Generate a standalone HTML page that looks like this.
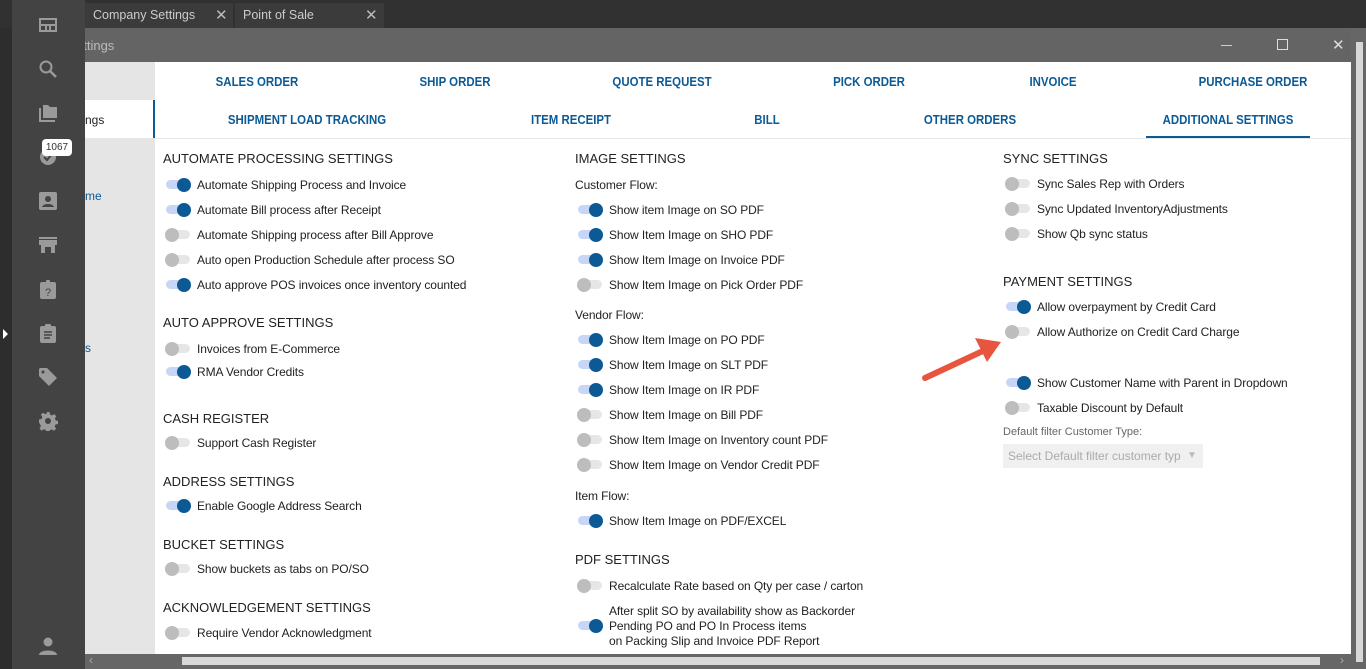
<!DOCTYPE html>
<html><head><meta charset="utf-8"><style>
*{margin:0;padding:0;box-sizing:border-box}
body{width:1366px;height:669px;overflow:hidden;background:#2d2d2d;font-family:"Liberation Sans",sans-serif;position:relative}
.a{position:absolute;white-space:nowrap}
.h{font-size:13px;color:#222;line-height:16px}
.l{font-size:12px;color:#222;line-height:14px;letter-spacing:-0.1px}
.tab{position:absolute;font-family:"Liberation Sans Narrow","Liberation Sans",sans-serif;font-weight:bold;font-size:13px;color:#0b5a96;text-align:center;width:240px;margin-left:-120px;line-height:16px;transform:scaleX(0.88)}
.t{position:absolute;width:24px;height:9px;border-radius:5px}
.t i{position:absolute;top:-2.5px;width:14px;height:14px;border-radius:50%}
.on{background:#c7d6f6}.on i{right:-1px;background:#0b5a96}
.off{background:#e6e6e6}.off i{left:-1px;background:#bdbdbd}
.ic{position:absolute;left:38px;width:20px;height:20px;fill:#9a9a9a}
</style></head><body>
<div class="a" style="left:0;top:0;width:1366px;height:28px;background:#313131"></div>
<div class="a" style="left:85px;top:3px;width:148px;height:25px;background:#3b3b3b;color:#ccc;font-size:12.5px;line-height:25px;padding-left:8px">Company Settings<span style="position:absolute;left:130px;font-size:15px;color:#bbb">✕</span></div>
<div class="a" style="left:235px;top:3px;width:149px;height:25px;background:#3b3b3b;color:#ccc;font-size:12.5px;line-height:25px;padding-left:8px">Point of Sale<span style="position:absolute;left:130px;font-size:15px;color:#bbb">✕</span></div>
<div class="a" style="left:12px;top:28px;width:1340px;height:34px;background:#646464"></div>
<div class="a" style="left:76px;top:38px;color:#bbb;font-size:13px">ettings</div>
<div class="a" style="left:1221px;top:45px;width:11px;height:1px;background:#ccc"></div>
<div class="a" style="left:1277px;top:39px;width:11px;height:11px;border:1.5px solid #ddd"></div>
<div class="a" style="left:1332px;top:36px;color:#ddd;font-size:15px">✕</div>
<div class="a" style="left:1351px;top:28px;width:15px;height:641px;background:#666"></div>
<div class="a" style="left:1356px;top:42px;width:7px;height:620px;background:#d8d8d8"></div>
<div class="a" style="left:85px;top:62px;width:70px;height:592px;background:#e5e5e5"></div>
<div class="a" style="left:85px;top:100px;width:70px;height:38px;background:#fff;border-right:2px solid #0b5a96"></div>
<div class="a" style="left:85px;top:113px;font-size:12px;color:#222">ngs</div>
<div class="a" style="left:85px;top:189px;font-size:12px;color:#0b5a96">me</div>
<div class="a" style="left:85px;top:341px;font-size:12px;color:#0b5a96">s</div>
<div class="a" style="left:155px;top:62px;width:1196px;height:592px;background:#fff"></div>
<div class="a" style="left:155px;top:138px;width:1196px;height:1px;background:#e8e8e8"></div>
<div class="a" style="left:1146px;top:136px;width:164px;height:2px;background:#0b5a96"></div>
<div class="tab" style="left:257px;top:74px">SALES ORDER</div>
<div class="tab" style="left:455px;top:74px">SHIP ORDER</div>
<div class="tab" style="left:662px;top:74px">QUOTE REQUEST</div>
<div class="tab" style="left:869px;top:74px">PICK ORDER</div>
<div class="tab" style="left:1053px;top:74px">INVOICE</div>
<div class="tab" style="left:1253px;top:74px">PURCHASE ORDER</div>
<div class="tab" style="left:307px;top:112px">SHIPMENT LOAD TRACKING</div>
<div class="tab" style="left:571px;top:112px">ITEM RECEIPT</div>
<div class="tab" style="left:767px;top:112px">BILL</div>
<div class="tab" style="left:970px;top:112px">OTHER ORDERS</div>
<div class="tab" style="left:1228px;top:112px">ADDITIONAL SETTINGS</div>

<div class="a h" style="left:163px;top:151px">AUTOMATE PROCESSING SETTINGS</div>
<div class="t on" style="left:166px;top:180px"><i></i></div><div class="a l" style="left:197px;top:178px">Automate Shipping Process and Invoice</div>
<div class="t on" style="left:166px;top:205px"><i></i></div><div class="a l" style="left:197px;top:203px">Automate Bill process after Receipt</div>
<div class="t off" style="left:166px;top:230px"><i></i></div><div class="a l" style="left:197px;top:228px">Automate Shipping process after Bill Approve</div>
<div class="t off" style="left:166px;top:255px"><i></i></div><div class="a l" style="left:197px;top:253px">Auto open Production Schedule after process SO</div>
<div class="t on" style="left:166px;top:280px"><i></i></div><div class="a l" style="left:197px;top:278px">Auto approve POS invoices once inventory counted</div>
<div class="a h" style="left:163px;top:315px">AUTO APPROVE SETTINGS</div>
<div class="t off" style="left:166px;top:344px"><i></i></div><div class="a l" style="left:197px;top:342px">Invoices from E-Commerce</div>
<div class="t on" style="left:166px;top:367px"><i></i></div><div class="a l" style="left:197px;top:365px">RMA Vendor Credits</div>
<div class="a h" style="left:163px;top:411px">CASH REGISTER</div>
<div class="t off" style="left:166px;top:438px"><i></i></div><div class="a l" style="left:197px;top:436px">Support Cash Register</div>
<div class="a h" style="left:163px;top:474px">ADDRESS SETTINGS</div>
<div class="t on" style="left:166px;top:501px"><i></i></div><div class="a l" style="left:197px;top:499px">Enable Google Address Search</div>
<div class="a h" style="left:163px;top:537px">BUCKET SETTINGS</div>
<div class="t off" style="left:166px;top:564px"><i></i></div><div class="a l" style="left:197px;top:562px">Show buckets as tabs on PO/SO</div>
<div class="a h" style="left:163px;top:600px">ACKNOWLEDGEMENT SETTINGS</div>
<div class="t off" style="left:166px;top:628px"><i></i></div><div class="a l" style="left:197px;top:626px">Require Vendor Acknowledgment</div>

<div class="a h" style="left:575px;top:151px">IMAGE SETTINGS</div>
<div class="a l" style="left:575px;top:178px">Customer Flow:</div>
<div class="t on" style="left:578px;top:205px"><i></i></div><div class="a l" style="left:609px;top:203px">Show item Image on SO PDF</div>
<div class="t on" style="left:578px;top:230px"><i></i></div><div class="a l" style="left:609px;top:228px">Show Item Image on SHO PDF</div>
<div class="t on" style="left:578px;top:255px"><i></i></div><div class="a l" style="left:609px;top:253px">Show Item Image on Invoice PDF</div>
<div class="t off" style="left:578px;top:280px"><i></i></div><div class="a l" style="left:609px;top:278px">Show Item Image on Pick Order PDF</div>
<div class="a l" style="left:575px;top:308px">Vendor Flow:</div>
<div class="t on" style="left:578px;top:335px"><i></i></div><div class="a l" style="left:609px;top:333px">Show Item Image on PO PDF</div>
<div class="t on" style="left:578px;top:360px"><i></i></div><div class="a l" style="left:609px;top:358px">Show Item Image on SLT PDF</div>
<div class="t on" style="left:578px;top:385px"><i></i></div><div class="a l" style="left:609px;top:383px">Show Item Image on IR PDF</div>
<div class="t off" style="left:578px;top:410px"><i></i></div><div class="a l" style="left:609px;top:408px">Show Item Image on Bill PDF</div>
<div class="t off" style="left:578px;top:435px"><i></i></div><div class="a l" style="left:609px;top:433px">Show Item Image on Inventory count PDF</div>
<div class="t off" style="left:578px;top:460px"><i></i></div><div class="a l" style="left:609px;top:458px">Show Item Image on Vendor Credit PDF</div>
<div class="a l" style="left:575px;top:489px">Item Flow:</div>
<div class="t on" style="left:578px;top:516px"><i></i></div><div class="a l" style="left:609px;top:514px">Show Item Image on PDF/EXCEL</div>
<div class="a h" style="left:575px;top:552px">PDF SETTINGS</div>
<div class="t off" style="left:578px;top:581px"><i></i></div><div class="a l" style="left:609px;top:579px">Recalculate Rate based on Qty per case / carton</div>
<div class="t on" style="left:578px;top:621px"><i></i></div>
<div class="a l" style="left:609px;top:604px;line-height:15px">After split SO by availability show as Backorder<br>Pending PO and PO In Process items<br>on Packing Slip and Invoice PDF Report</div>

<div class="a h" style="left:1003px;top:151px">SYNC SETTINGS</div>
<div class="t off" style="left:1006px;top:179px"><i></i></div><div class="a l" style="left:1037px;top:177px">Sync Sales Rep with Orders</div>
<div class="t off" style="left:1006px;top:204px"><i></i></div><div class="a l" style="left:1037px;top:202px">Sync Updated InventoryAdjustments</div>
<div class="t off" style="left:1006px;top:229px"><i></i></div><div class="a l" style="left:1037px;top:227px">Show Qb sync status</div>
<div class="a h" style="left:1003px;top:274px">PAYMENT SETTINGS</div>
<div class="t on" style="left:1006px;top:302px"><i></i></div><div class="a l" style="left:1037px;top:300px">Allow overpayment by Credit Card</div>
<div class="t off" style="left:1006px;top:327px"><i></i></div><div class="a l" style="left:1037px;top:325px">Allow Authorize on Credit Card Charge</div>
<div class="t on" style="left:1006px;top:378px"><i></i></div><div class="a l" style="left:1037px;top:376px">Show Customer Name with Parent in Dropdown</div>
<div class="t off" style="left:1006px;top:403px"><i></i></div><div class="a l" style="left:1037px;top:401px">Taxable Discount by Default</div>
<div class="a" style="left:1003px;top:426px;font-size:11px;color:#666">Default filter Customer Type:</div>
<div class="a" style="left:1003px;top:444px;width:200px;height:24px;background:#f0f0f0;border-radius:2px;font-size:12px;color:#aaa;line-height:24px;padding-left:5px">Select Default filter customer typ<span style="position:absolute;left:184px;font-size:10px;color:#bbb">▼</span></div>

<svg class="a" style="left:915px;top:330px" width="95" height="60" viewBox="0 0 95 60">
<line x1="10" y1="48" x2="70" y2="20" stroke="#e8553f" stroke-width="6" stroke-linecap="round"/>
<polygon points="86,12 60,8 72,32" fill="#e8553f"/>
</svg>

<div class="a" style="left:85px;top:654px;width:1266px;height:15px;background:#666"></div>
<div class="a" style="left:182px;top:657px;width:1138px;height:8px;background:#d8d8d8"></div>
<div class="a" style="left:89px;top:653px;color:#aaa;font-size:12px">‹</div>
<div class="a" style="left:1340px;top:653px;color:#aaa;font-size:12px">›</div>

<div class="a" style="left:12px;top:0;width:73px;height:669px;background:#434343"></div>
<svg class="ic" style="top:15px" viewBox="0 0 20 20"><path d="M1 3h18v14H1z M3 5v4h14V5z M3 11v4h4v-4z M9 11v4h2v-4z M13 11v4h4v-4z" fill-rule="evenodd"/></svg>
<svg class="ic" style="top:59px" viewBox="0 0 20 20"><circle cx="8" cy="8" r="5.5" fill="none" stroke="#9a9a9a" stroke-width="2"/><path d="M12 12l6 6" stroke="#9a9a9a" stroke-width="2.5"/></svg>
<svg class="ic" style="top:103px" viewBox="0 0 20 20"><path d="M1 5h2v12h14v2H1z M5 2h5l2 2h7v11H5z"/></svg>
<svg class="ic" style="top:147px" viewBox="0 0 20 20"><circle cx="10" cy="10" r="8"/><path d="M6 10l3 3 5-6" stroke="#434343" stroke-width="2" fill="none"/></svg>
<div class="a" style="left:42px;top:139px;width:30px;height:17px;background:#fff;border-radius:4px;font-size:10px;color:#333;text-align:center;line-height:17px">1067</div>
<svg class="ic" style="top:191px" viewBox="0 0 20 20"><rect x="1" y="1" width="18" height="18" rx="2"/><circle cx="10" cy="8" r="3" fill="#434343"/><path d="M4 16c1-4 11-4 12 0z" fill="#434343"/></svg>
<svg class="ic" style="top:235px" viewBox="0 0 20 20"><path d="M1 2h18v2H1z M1 5h18v5H17v8h-4v-6H7v6H3v-8H1z"/></svg>
<svg class="ic" style="top:279px" viewBox="0 0 20 20"><rect x="2" y="3" width="16" height="17" rx="2"/><rect x="8" y="1" width="4" height="4" rx="1"/><text x="10" y="17" font-size="11" text-anchor="middle" fill="#434343" font-family="Liberation Sans">?</text></svg>
<svg class="ic" style="top:323px" viewBox="0 0 20 20"><rect x="2" y="3" width="16" height="17" rx="2"/><rect x="7" y="1" width="6" height="4" rx="1"/><path d="M6 9h8M6 12h8M6 15h6" stroke="#434343" stroke-width="1.5"/></svg>
<svg class="ic" style="top:367px" viewBox="0 0 20 20"><path d="M1 2v7l10 10 8-8L9 1H2z"/><circle cx="5" cy="5" r="1.5" fill="#434343"/></svg>
<svg class="ic" style="top:411px" viewBox="0 0 20 20"><path d="M8.5 1h3l.5 2.5 2 1 2.2-1.4 2.1 2.1-1.4 2.2.8 2 2.3.6v3l-2.5.5-.8 2 1.4 2.2-2.1 2.1-2.2-1.4-2 .8-.5 2.3h-3l-.5-2.5-2-.8-2.2 1.4-2.1-2.1 1.4-2.2-.8-2L1 11.5v-3l2.5-.5.8-2-1.4-2.2 2.1-2.1 2.2 1.4 2-.8z"/><circle cx="10" cy="10" r="3" fill="#434343"/></svg>
<svg class="ic" style="top:636px" viewBox="0 0 20 20"><circle cx="10" cy="6" r="4.5"/><path d="M1 19c0-6 18-6 18 0z"/></svg>
<div class="a" style="left:3px;top:329px;width:0;height:0;border-left:5px solid #fff;border-top:5px solid transparent;border-bottom:5px solid transparent"></div>
</body></html>
